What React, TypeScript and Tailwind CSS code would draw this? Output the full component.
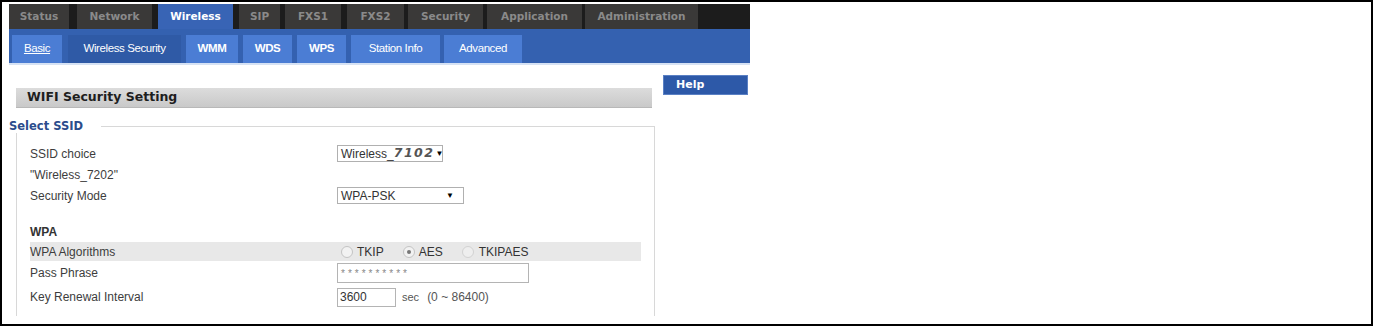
import React from 'react';

const topTabs = [
  { label: 'Status', cls: 'w-[60px]' },
  { label: 'Network', cls: 'w-[75px] ml-[8px]' },
  { label: 'Wireless', cls: 'w-[75px] ml-[6px]', active: true },
  { label: 'SIP', cls: 'w-[41px] ml-[6px]' },
  { label: 'FXS1', cls: 'w-[56px] ml-[5px]' },
  { label: 'FXS2', cls: 'w-[57px] ml-[6px]' },
  { label: 'Security', cls: 'w-[75px] ml-[4px]' },
  { label: 'Application', cls: 'w-[95px] ml-[4px]' },
  { label: 'Administration', cls: 'w-[113px] ml-[3px]' },
];

const subTabs = [
  { label: 'Basic', cls: 'w-[50px] ml-[3px] underline' },
  { label: 'Wireless Security', cls: 'w-[113px] ml-[6px]', active: true },
  { label: 'WMM', cls: 'w-[52px] ml-[5px] font-bold' },
  { label: 'WDS', cls: 'w-[49px] ml-[5px] font-bold' },
  { label: 'WPS', cls: 'w-[49px] ml-[5px] font-bold' },
  { label: 'Station Info', cls: 'w-[89px] ml-[5px]' },
  { label: 'Advanced', cls: 'w-[78px] ml-[4px]' },
];

const Radio = ({ checked }: { checked?: boolean }) => (
  <span className="w-[12px] h-[12px] rounded-full border border-[#c4c4c4] bg-[#f2f2f2] flex items-center justify-center">
    {checked && <span className="w-[4px] h-[4px] rounded-full bg-[#777]" />}
  </span>
);

const Row = ({ label, children, className = '' }: { label: React.ReactNode; children?: React.ReactNode; className?: string }) => (
  <div className={`flex items-center ${className}`}>
    <div className="w-[307px] shrink-0">{label}</div>
    <div className="flex items-center">{children}</div>
  </div>
);

export default function App() {
  return (
    <div className="w-[1373px] h-[326px] border-2 border-black overflow-hidden bg-white text-[12px] text-[#3d3d3d] font-['Liberation_Sans',Arial,sans-serif]">
      <div className="pl-[7px] pt-[2px] w-[748px]">
        {/* main menu */}
        <div className="h-[25px] flex bg-[#1c1c1c] font-['DejaVu_Sans',Verdana,sans-serif] font-bold text-[10.5px]">
          {topTabs.map((t) => (
            <div
              key={t.label}
              className={`${t.cls} h-full flex items-center justify-center ${t.active ? 'bg-[#3864b5] text-white' : 'bg-[#3a3938] text-[#8a8a8a]'}`}
            >
              {t.label}
            </div>
          ))}
        </div>

        {/* sub menu */}
        <div className="h-[34px] flex items-end bg-[#3461b0]">
          {subTabs.map((t) => (
            <div
              key={t.label}
              className={`${t.cls} h-[28px] flex items-center justify-center text-white text-[11.5px] tracking-[-0.4px] ${t.active ? 'bg-[#2f5aa6]' : 'bg-[#4b7dd4]'}`}
            >
              {t.label}
            </div>
          ))}
        </div>
        <div className="h-[2px] bg-[#d6e2f4]" />

        <div className="flex">
          {/* left column */}
          <div className="w-[646px]">
            <div className="ml-[7px] mt-[23px] w-[636px] h-[20px] flex items-center pl-[11px] bg-gradient-to-b from-[#dcdcdc] to-[#c9c9c9] border-b border-[#b8b8b8] font-['DejaVu_Sans',Verdana,sans-serif] font-bold text-[12.5px] text-[#1e1e1e]">
              WIFI Security Setting
            </div>

            <fieldset className="ml-[7px] mt-[11px] w-[639px] border border-b-0 border-[#d8d8d8] px-0 pb-[8px]">
              <legend className="-ml-[8px] pr-[18px] bg-white font-['DejaVu_Sans',Verdana,sans-serif] font-bold text-[11.5px] text-[#2b4c8c] leading-[14px]">
                Select SSID
              </legend>

              <div className="pl-[13px] w-[624px] mt-[10px]">
                <Row label="SSID choice" className="h-[21px]">
                  <div className="w-[106px] h-[17px] border border-[#b0b0b0] flex items-center pl-[3px] text-[12px] text-[#333]">
                    <span>Wireless_</span>
                    <span className="font-['DejaVu_Sans',Verdana,sans-serif] font-bold italic text-[12.5px] tracking-[1.5px] text-[#555]">7102</span>
                    <span className="text-[8px] text-black ml-[1px]">▼</span>
                  </div>
                </Row>
                <Row label={'"Wireless_7202"'} className="h-[21px]" />
                <Row label="Security Mode" className="h-[21px]">
                  <div className="w-[127px] h-[17px] border border-[#b0b0b0] flex items-center justify-between pl-[3px] pr-[9px] text-[12px] text-[#333]">
                    <span>WPA-PSK</span>
                    <span className="text-[8px] text-black">▼</span>
                  </div>
                </Row>
                <div className="h-[15px]" />
                <Row label={<span className="font-bold text-[#333]">WPA</span>} className="h-[21px]" />
                <Row label="WPA Algorithms" className="h-[19px] bg-[#e8e8e8] w-[611px]">
                  <div className="flex items-center text-[12px] text-[#333]">
                    <span className="ml-[4px]"><Radio /></span>
                    <span className="ml-[4px]">TKIP</span>
                    <span className="ml-[19px]"><Radio checked /></span>
                    <span className="ml-[4px]">AES</span>
                    <span className="ml-[19px] opacity-60"><Radio /></span>
                    <span className="ml-[5px]">TKIPAES</span>
                  </div>
                </Row>
                <Row label="Pass Phrase" className="h-[22px] mt-[1px]">
                  <div className="w-[192px] h-[20px] border border-[#b4b4b4] flex items-center pl-[3px] text-[10px] tracking-[3px] text-[#888]">
                    **********
                  </div>
                </Row>
                <Row label="Key Renewal Interval" className="h-[22px] mt-[2px]">
                  <div className="w-[59px] h-[19px] border border-[#b4b4b4] flex items-center pl-[2px] text-[12px] text-[#333]">3600</div>
                  <span className="ml-[6px] text-[#555] text-[11px]">sec</span>
                  <span className="ml-[8px] text-[#555]">(0 ~ 86400)</span>
                </Row>
              </div>
            </fieldset>
          </div>

          {/* right column */}
          <div className="ml-[8px] w-[85px]">
            <div className="mt-[10px] h-[20px] bg-[#2d59a8] border border-[#5a80c4] flex items-center pl-[12px] font-['DejaVu_Sans',Verdana,sans-serif] font-bold text-[11px] text-white">
              Help
            </div>
          </div>
        </div>
      </div>
    </div>
  );
}
